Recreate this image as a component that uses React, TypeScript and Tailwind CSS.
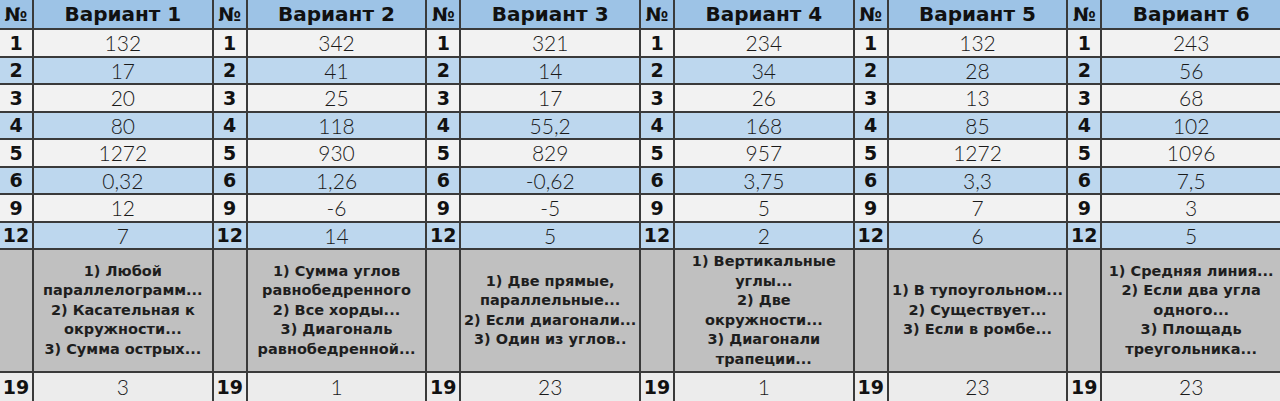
const variants = [1, 2, 3, 4, 5, 6];

const rows: { label: string; values: string[]; blue: boolean }[] = [
  { label: "1", values: ["132", "342", "321", "234", "132", "243"], blue: false },
  { label: "2", values: ["17", "41", "14", "34", "28", "56"], blue: true },
  { label: "3", values: ["20", "25", "17", "26", "13", "68"], blue: false },
  { label: "4", values: ["80", "118", "55,2", "168", "85", "102"], blue: true },
  { label: "5", values: ["1272", "930", "829", "957", "1272", "1096"], blue: false },
  { label: "6", values: ["0,32", "1,26", "-0,62", "3,75", "3,3", "7,5"], blue: true },
  { label: "9", values: ["12", "-6", "-5", "5", "7", "3"], blue: false },
  { label: "12", values: ["7", "14", "5", "2", "6", "5"], blue: true },
];

const notes: string[][] = [
  ["1) Любой", "параллелограмм...", "2) Касательная к", "окружности...", "3) Сумма острых..."],
  ["1) Сумма углов", "равнобедренного", "2) Все хорды...", "3) Диагональ", "равнобедренной..."],
  ["1) Две прямые,", "параллельные...", "2) Если диагонали...", "3) Один из углов.."],
  ["1) Вертикальные", "углы...", "2) Две", "окружности...", "3) Диагонали", "трапеции..."],
  ["1) В тупоугольном...", "2) Существует...", "3) Если в ромбе..."],
  ["1) Средняя линия...", "2) Если два угла", "одного...", "3) Площадь", "треугольника..."],
];

const last = ["3", "1", "23", "1", "23", "23"];

const bold = "font-['DejaVu_Sans','Liberation_Sans',sans-serif] font-bold";

export default function App() {
  return (
    <div className="w-[1280px] h-[401px] overflow-hidden font-['Lato','Liberation_Sans',sans-serif] text-[#111]">
      <div className="grid h-full grid-cols-[repeat(6,32px_minmax(0,1fr))] grid-rows-[28px_repeat(8,25.5px)_121px_28px] gap-[2px] bg-[#3a3a3a]">
        {/* header */}
        {variants.map((v) => (
          <div key={`h${v}`} className="contents">
            <div className={`flex items-center justify-center bg-[#9dc3e6] text-[19px] ${bold}`}>№</div>
            <div className={`flex items-center justify-center bg-[#9dc3e6] text-[20px] ${bold}`}>
              Вариант {v}
            </div>
          </div>
        ))}

        {rows.map((r) =>
          r.values.map((val, i) => (
            <div key={`${r.label}-${i}`} className="contents">
              <div
                className={`flex items-center justify-center text-[19px] ${bold} ${
                  r.blue ? "bg-[#bdd7ee]" : "bg-[#f2f2f2]"
                }`}
              >
                {r.label}
              </div>
              <div
                className={`flex items-center justify-center text-[21px] font-light text-[#1a1a1a] ${
                  r.blue ? "bg-[#bdd7ee]" : "bg-[#f2f2f2]"
                }`}
              >
                {val}
              </div>
            </div>
          ))
        )}

        {notes.map((lines, i) => (
          <div key={`n${i}`} className="contents">
            <div className="bg-[#c0c0c0]" />
            <div
              className={`flex flex-col items-center justify-center bg-[#c0c0c0] text-center text-[14.5px] leading-[19.5px] text-[#1e1e1e] ${bold}`}
            >
              {lines.map((l) => (
                <span key={l} className="whitespace-nowrap">
                  {l}
                </span>
              ))}
            </div>
          </div>
        ))}

        {last.map((val, i) => (
          <div key={`l${i}`} className="contents">
            <div className={`flex items-center justify-center bg-[#ececec] text-[19px] ${bold}`}>19</div>
            <div className="flex items-center justify-center bg-[#ececec] text-[21px] font-light text-[#1a1a1a]">
              {val}
            </div>
          </div>
        ))}
      </div>
    </div>
  );
}
